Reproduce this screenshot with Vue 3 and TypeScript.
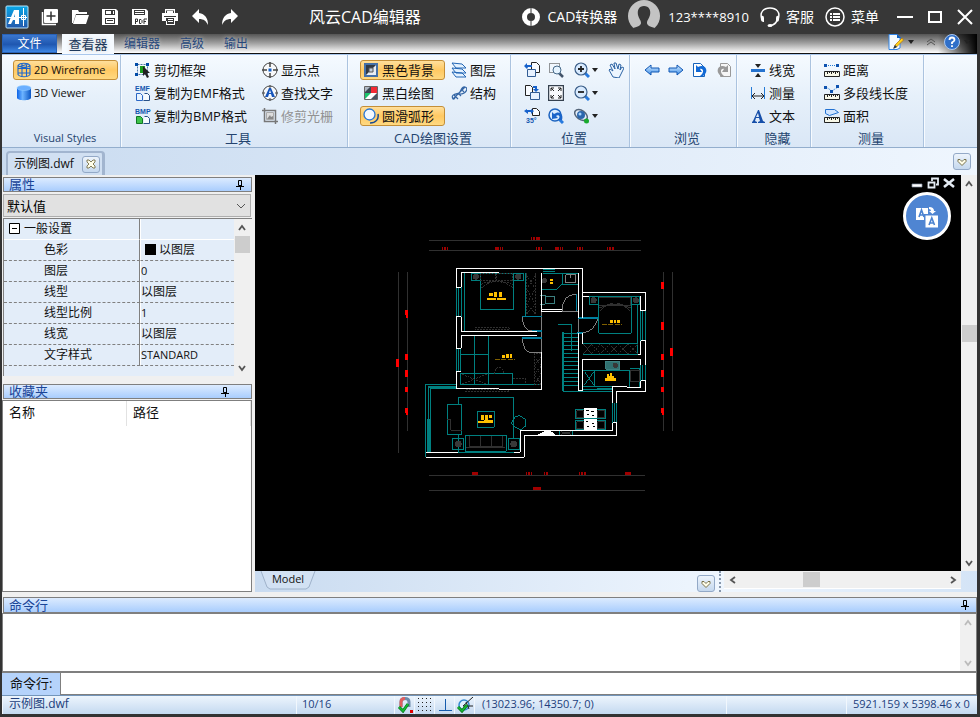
<script setup lang="ts">
import { ref } from 'vue'

interface Tool {
  icon: string
  label: string
  active?: boolean
  disabled?: boolean
}

interface Group {
  key: string
  title: string
  columns: Tool[][]
}

const quickActions: Tool[] = [
  { icon: 'new', label: '新建' },
  { icon: 'folder', label: '打开' },
  { icon: 'save', label: '保存' },
  { icon: 'pdf', label: '另存为PDF' },
  { icon: 'print', label: '打印' },
  { icon: 'undo', label: '撤销' },
  { icon: 'redo', label: '重做' },
]

const groups: Group[] = [
  {
    key: 'styles',
    title: 'Visual Styles',
    columns: [[
      { icon: 'wire', label: '2D Wireframe', active: true },
      { icon: 'cylinder', label: '3D Viewer' },
    ]],
  },
  {
    key: 'tools',
    title: '工具',
    columns: [
      [
        { icon: 'cutframe', label: '剪切框架' },
        { icon: 'emf', label: '复制为EMF格式' },
        { icon: 'bmp', label: '复制为BMP格式' },
      ],
      [
        { icon: 'points', label: '显示点' },
        { icon: 'findtext', label: '查找文字' },
        { icon: 'raster', label: '修剪光栅', disabled: true },
      ],
    ],
  },
  {
    key: 'settings',
    title: 'CAD绘图设置',
    columns: [
      [
        { icon: 'blackbg', label: '黑色背景', active: true },
        { icon: 'bw', label: '黑白绘图' },
        { icon: 'arc', label: '圆滑弧形', active: true },
      ],
      [
        { icon: 'layers', label: '图层' },
        { icon: 'struct', label: '结构' },
      ],
    ],
  },
]

const hideTools: Tool[] = [
  { icon: 'lineweight', label: '线宽' },
  { icon: 'dimension', label: '测量' },
  { icon: 'text', label: '文本' },
]

const measureTools: Tool[] = [
  { icon: 'distance', label: '距离' },
  { icon: 'polyline', label: '多段线长度' },
  { icon: 'area', label: '面积' },
]

const positionTools: { icon: string; label: string; menu?: boolean }[] = [
  { icon: 'rotleft', label: '向左旋转' },
  { icon: 'zoomwin', label: '窗口缩放' },
  { icon: 'zoomin', label: '放大', menu: true },
  { icon: 'hand', label: '平移' },
  { icon: 'rotright', label: '向右旋转' },
  { icon: 'fit', label: '适合窗口' },
  { icon: 'zoomout', label: '缩小', menu: true },
  { icon: 'blank', label: '' },
  { icon: 'angle', label: '旋转角度' },
  { icon: 'zoomprev', label: '上一个缩放' },
  { icon: 'orbit', label: '动态观察', menu: true },
]

const browseTools: Tool[] = [
  { icon: 'left', label: '后退' },
  { icon: 'right', label: '前进' },
  { icon: 'pageundo', label: '撤销视图' },
  { icon: 'pageredo', label: '重做视图', disabled: true },
]

const properties: { name: string; value: string; swatch?: boolean; latin?: boolean }[] = [
  { name: '色彩', value: '以图层', swatch: true },
  { name: '图层', value: '0', latin: true },
  { name: '线型', value: '以图层' },
  { name: '线型比例', value: '1', latin: true },
  { name: '线宽', value: '以图层' },
  { name: '文字样式', value: 'STANDARD', latin: true },
]

const preset = ref('默认值')
const command = ref('')
const log = ref('')
const stairs = Array.from({ length: 14 }, (_, i) => 337 + i * 12)
</script>

<template>
  <svg class="sprite" width="0" height="0" aria-hidden="true">
    <defs>
      <linearGradient id="g-logo" x1="0" y1="0" x2="0" y2="1"><stop offset="0" stop-color="#08a8e8" /><stop offset="1" stop-color="#2258ac" /></linearGradient>
      <linearGradient id="g-cyl"><stop offset="0" stop-color="#0c63e8" /><stop offset=".4" stop-color="#6db4ff" /><stop offset="1" stop-color="#0b56c4" /></linearGradient>
      <linearGradient id="g-arrow" x1="0" y1="0" x2="0" y2="1"><stop offset="0" stop-color="#d4ebff" /><stop offset="1" stop-color="#3f8fe8" /></linearGradient>
    </defs>
    <symbol id="i-blank" viewBox="0 0 16 16" />
    <symbol id="i-logo" viewBox="0 0 24 24">
      <rect x="1" y="1" width="22" height="22" rx="1" fill="url(#g-logo)" stroke="#b9e4fa" />
      <path d="M3 19 9 5h5v14h-4v-4H8l-2 4zM9 12h1V9z" fill="#fff" />
      <path d="M2 12.500h20M18.500 3v18M16.500 10.500h4v4h-4z" fill="none" stroke="#fff" />
    </symbol>
    <symbol id="i-new" viewBox="0 0 18 18"><rect x="3" y="1" width="14" height="14" rx="1" fill="#fff" /><path d="M1.500 4v12.500H15" fill="none" stroke="#fff" stroke-width="1.500" /><path d="M10 3.500v9M5.500 8h9" stroke="#333" stroke-width="1.500" /></symbol>
    <symbol id="i-folder" viewBox="0 0 18 18"><path d="M1 15V2h6l1 2h8v2H5L2 15zM5 7h13l-3 9H2z" fill="#fff" /></symbol>
    <symbol id="i-save" viewBox="0 0 18 18"><path d="M1 1h14l2 2v14H1z" fill="#fff" /><path d="M4 2h10v5H4zM4 10h10v6H4z" fill="#373737" /><path d="M5 3h8v3H5zM5 11h8v4H5z" fill="#fff" /><path d="M10 3h2v3h-2zM6 12h6v1H6z" fill="#373737" /></symbol>
    <symbol id="i-pdf" viewBox="0 0 18 18"><path d="M1 1h14l2 2v14H1z" fill="#fff" /><path d="M3 2h11v5H3z" fill="#373737" /><path d="M4 3h9v1H4zM4 5h9v1H4z" fill="#fff" /><path d="M4.500 16v-5h2v2.500h-2M8.500 11.500h1.500l1 1v2l-1 1H8.500zM13 16v-5h3M13 13.500h2" fill="none" stroke="#333" /></symbol>
    <symbol id="i-print" viewBox="0 0 18 18"><path d="M4 1h10v4h3v8h-3v4H5v-4H1V5h3z" fill="#fff" /><path d="M5 2.500h8V5H5zM3 8h12v1H3zM5 10h8v6H6v-3H5z" fill="#373737" /><path d="M6 3h6v2H6zM7 11h5v1H7zM7 13h5v1H7z" fill="#fff" /></symbol>
    <symbol id="i-undo" viewBox="0 0 18 18"><path d="M1 8 8 1v4c6 1 9 5 9 12-2-4-4-6-9-6v4z" fill="#fff" /></symbol>
    <symbol id="i-redo" viewBox="0 0 18 18"><path d="m17 8-7-7v4C4 6 1 10 1 17c2-4 4-6 9-6v4z" fill="#fff" /></symbol>
    <symbol id="i-convert" viewBox="0 0 20 20"><circle cx="10" cy="10" r="6.500" fill="none" stroke="#fff" stroke-width="5" /><path d="M10 0v6M10 14v6" stroke="#373737" /></symbol>
    <symbol id="i-avatar" viewBox="0 0 32 32"><circle cx="16" cy="16" r="16" fill="#c3c3c3" /><path d="M16 6c-5 0-7 4-6 9 1 4 3 5 3 8 0 2-3 4-8 5l4 4h14l4-4c-5-1-8-3-8-5 0-3 2-4 3-8 1-5-1-9-6-9z" fill="#373737" /></symbol>
    <symbol id="i-headset" viewBox="0 0 20 20"><path d="M2 12C-1 5 4 1 10 1s11 4 8 11M17 13c-1 4-3 5-7 5.500" fill="none" stroke="#fff" stroke-width="1.500" /><path d="M1 9q3-1 3 2v4Q0 15 1 9zM19 9q-3-1-3 2v4q4 0 3-6z" fill="#fff" /><ellipse cx="10" cy="18.500" rx="2.500" ry="1.500" fill="#fff" /></symbol>
    <symbol id="i-menu" viewBox="0 0 20 20"><circle cx="10" cy="10" r="9" fill="none" stroke="#fff" stroke-width="1.500" /><path d="M5 6h2v2H5zM8 6h7v2H8zM5 9h2v2H5zM8 9h7v2H8zM5 12h2v2H5zM8 12h7v2H8z" fill="#fff" /></symbol>
    <symbol id="i-min" viewBox="0 0 16 16"><path d="M0 7h16v2H0z" fill="#fff" /></symbol>
    <symbol id="i-max" viewBox="0 0 16 16"><path d="M2 3h12v10H2z" fill="none" stroke="#fff" stroke-width="2" /></symbol>
    <symbol id="i-close" viewBox="0 0 16 16"><path d="m1 1 14 14M15 1 1 15" stroke="#fff" stroke-width="2" /></symbol>
    <symbol id="i-edit" viewBox="0 0 16 16"><path d="M1 .5h8l3 3V14l-3 1.500H1z" fill="#f4faff" stroke="#3184e6" /><path d="M9 0v4h4z" fill="#0c5fc2" /><path d="m6 14 1-3 7-7 1.500 2-7 7z" fill="#ffd21a" stroke="#b66f0b" stroke-width=".7" /><path d="m5 15 2-4 2 2z" fill="#203850" /></symbol>
    <symbol id="i-help" viewBox="0 0 16 16"><circle cx="8" cy="8" r="7.500" fill="#2f6fc9" stroke="#a8c8f2" /><path d="M5.500 6Q5.500 3.500 8 3.500T10.500 6Q10.500 7 8 8.500V10M8 11.200v1.800" fill="none" stroke="#fff" stroke-width="1.800" /></symbol>
    <symbol id="i-caret" viewBox="0 0 6 4"><path d="M0 0h6L3 4z" fill="#222" /></symbol>
    <symbol id="i-collapse" viewBox="0 0 10 8"><path d="m1 4 4-3 4 3M1 7l4-3 4 3" fill="none" stroke="#555" /></symbol>

    <symbol id="i-wire" viewBox="0 0 16 16"><path d="M2 3.500C4 .5 12 .5 14 3.500v9c-2 3-10 3-12 0zM2 3.500c2 2.500 10 2.500 12 0M6 1.500v13.500M10.500 1.500v13.500M2 6.500h12M2 11h12M4 4.500 12 2" fill="none" stroke="#1b66cd" stroke-width="1.100" /></symbol>
    <symbol id="i-cylinder" viewBox="0 0 16 16"><path d="M1 3v10c1 3 13 3 14 0V3z" fill="url(#g-cyl)" /><ellipse cx="8" cy="3" rx="7" ry="2.500" fill="#6aafff" stroke="#8cc8ff" stroke-width=".6" /></symbol>
    <symbol id="i-cutframe" viewBox="0 0 16 16"><path d="M2.500 2.500h10v10h-10z" fill="none" stroke="#5077a5" stroke-dasharray="2 1" /><path d="M0 1h3v3H0zM11 1h3v3h-3zM0 11h3v3H0z" fill="#004ba8" /><path d="M5 4h5v7H5z" fill="#1a9d1e" /><path d="m8 4 7 7h-3l2 4-2 1-2-4-2 2z" fill="#222" /></symbol>
    <symbol id="i-emf" viewBox="0 0 16 16"><text x="0" y="6" class="tiny">EMF</text><path d="M1.500 8.500h4l2 2v5h-6z" fill="#e9f4ff" stroke="#2a66c4" /><path d="M9.500 8.500h3l2 2v5h-6" fill="#f7fbff" stroke="#274f86" /></symbol>
    <symbol id="i-bmp" viewBox="0 0 16 16"><text x="0" y="6" class="tiny">BMP</text><path d="M1.500 8.500h4l2 2v5h-6z" fill="#3ec34a" stroke="#0f7624" /><path d="M9.500 8.500h3l2 2v5h-6" fill="#f7fbff" stroke="#274f86" /></symbol>
    <symbol id="i-points" viewBox="0 0 16 16"><circle cx="8" cy="8" r="7" fill="#f7f8fa" stroke="#444" /><path d="M8 0v5M8 11v5M0 8h5M11 8h5" stroke="#444" stroke-width="1.500" /><path d="M6.500 6.500h3v3h-3z" fill="#1261ca" /></symbol>
    <symbol id="i-findtext" viewBox="0 0 16 16"><circle cx="8" cy="8" r="7" fill="#f3f6fa" stroke="#444" /><path d="m3 12 4-9h2l4 9h-3l-1-3H7l-1 3zM8 5 7 8h2z" fill="#1554ba" /><path d="M8 0v3M8 13v3M0 8h3M13 8h3" stroke="#444" /></symbol>
    <symbol id="i-raster" viewBox="0 0 16 16"><path d="M2.500 0v13.500H16M0 2.500h13.500V16" fill="none" stroke="#777" stroke-width="1.500" /><path d="M4.500 4.500h7v7h-7z" fill="#ddd" stroke="#aaa" /><path d="m5 11 3-4 1 2 2-1v3z" fill="#888" /></symbol>
    <symbol id="i-blackbg" viewBox="0 0 16 16"><path d="M2 2h12v12H2z" fill="#303945" stroke="#4470a8" stroke-width="2" /><path d="M3 13 13 3v10z" fill="#e8edf4" /><path d="M6 6h4v4H6z" fill="#c2cfdf" stroke="#555" /></symbol>
    <symbol id="i-bw" viewBox="0 0 16 16"><path d="M1.500 1.500h13v13h-13z" fill="#fff" stroke="#666" /><path d="M2 2h6v6H2z" fill="#3c4652" /><path d="M2 7V2h5z" fill="#aeb8c4" /><path d="M8 2h6v6H8z" fill="#f32a34" /><path d="M2 8h6v6H2z" fill="#1bc46c" /><path d="m2 14 6-6v6z" fill="#fff" /><path d="M8 14l6-6v6z" fill="#485461" /></symbol>
    <symbol id="i-arc" viewBox="0 0 16 16"><circle cx="6.500" cy="6.500" r="5.500" fill="#f2f8ff" stroke="#2876d6" stroke-width="1.300" /><path d="M15 6c1 5-2 9-8 9" fill="none" stroke="#1a4b91" stroke-width="1.500" /></symbol>
    <symbol id="i-layers" viewBox="0 0 16 16"><path d="m1 10 10 1 4 4-10 0zM1 6l10 1 4 4H5zM1 1l10 1 4 4H5z" fill="#e4f2ff" stroke="#2366b5" /></symbol>
    <symbol id="i-struct" viewBox="0 0 16 16"><path d="M2 14C-1 9 6 9 8 8s2-7 6-6 1 7-5 7-4 6-7 5zM2 14 14 2M3 10l4 4M7 8l3 3M10 4l3 3" fill="none" stroke="#3566a5" stroke-width="1.200" /></symbol>
    <symbol id="i-rotleft" viewBox="0 0 16 16"><path d="M7.500.5h5l3 3v7h-8z" fill="#f8fbff" stroke="#222" /><path d="M3.500 7.500h8v7h-8z" fill="#e6f1ff" stroke="#315c94" /><path d="m0 4 3-3v2h5v2H4l-1 2z" fill="#1762cc" /></symbol>
    <symbol id="i-rotright" viewBox="0 0 16 16"><path d="M1.500.5h5l2 2v8h-7z" fill="#f8fbff" stroke="#222" /><path d="M6.500 7.500h9v7h-9z" fill="#e6f1ff" stroke="#315c94" /><path d="M9 1h4v3h2l-3 3-3-3h2V3H9z" fill="#1762cc" /></symbol>
    <symbol id="i-angle" viewBox="0 0 16 16"><path d="M8.500.5h4l3 3v4h-7z" fill="#f8fbff" stroke="#222" /><path d="m0 3 3-2v1h4V1l3 2-3 3V4H4v2z" fill="#1762cc" /><text x="2" y="15" class="tiny">35°</text></symbol>
    <symbol id="i-zoomwin" viewBox="0 0 16 16"><path d="M1.500 1.500h10v9h-10z" fill="none" stroke="#333" stroke-dasharray="1 1" /><path d="m11 11 4 4" stroke="#42536a" stroke-width="2.500" /><circle cx="9" cy="8" r="4" fill="#e6f4ff" stroke="#466989" /></symbol>
    <symbol id="i-zoomin" viewBox="0 0 16 16"><path d="m10 10 5 5" stroke="#287ade" stroke-width="3" /><circle cx="7" cy="7" r="6" fill="#d9ebff" stroke="#3c5f8a" stroke-width="1.200" /><path d="M4 7h6M7 4v6" stroke="#222" stroke-width="1.800" /></symbol>
    <symbol id="i-zoomout" viewBox="0 0 16 16"><path d="m10 10 5 5" stroke="#287ade" stroke-width="3" /><circle cx="7" cy="7" r="6" fill="#d9ebff" stroke="#3c5f8a" stroke-width="1.200" /><path d="M4 7h6" stroke="#222" stroke-width="1.800" /></symbol>
    <symbol id="i-zoomprev" viewBox="0 0 16 16"><path d="m11 11 4 4" stroke="#287ade" stroke-width="3" /><circle cx="7" cy="7" r="6" fill="#dceeff" stroke="#1c63bf" stroke-width="1.500" /><path d="M4 11V4l2 2c5-4 10 0 8 6h-3c2-4-1-6-3-4l2 2z" fill="#1b65c9" /></symbol>
    <symbol id="i-fit" viewBox="0 0 16 16"><path d="M.5.5h15v15H.5z" fill="#f8fafc" stroke="#35414f" stroke-width="1.500" /><path d="M3 6V3h3M10 3h3v3M13 10v3h-3M6 13H3v-3M3 3l3 3M13 3l-3 3M3 13l3-3M13 13l-3-3" fill="none" stroke="#222" /></symbol>
    <symbol id="i-orbit" viewBox="0 0 16 16"><ellipse cx="7" cy="7" rx="7" ry="4.500" transform="rotate(35 7 7)" fill="#e5eef8" stroke="#546579" stroke-width="1.500" /><circle cx="7" cy="7" r="4" fill="#2a66ac" /><circle cx="6" cy="6" r="1.500" fill="#a8d4ff" /><circle cx="12.500" cy="13" r="2.500" fill="#19aa2d" /></symbol>
    <symbol id="i-hand" viewBox="0 0 16 16"><path d="M5 15 1 8l1-1 3 2-3-6 2-1 3 5-1-6h2l2 6 1-5 2 1-1 5 2-3 2 1-3 6-2 4z" fill="#edf6ff" stroke="#2e64a4" /></symbol>
    <symbol id="i-left" viewBox="0 0 16 16"><path d="m1 8 6-5v3h8v4H7v3z" fill="url(#g-arrow)" stroke="#0f56b4" /></symbol>
    <symbol id="i-right" viewBox="0 0 16 16"><path d="m15 8-6-5v3H1v4h8v3z" fill="url(#g-arrow)" stroke="#0f56b4" /></symbol>
    <symbol id="i-pageundo" viewBox="0 0 16 16"><path d="M1.500 1.500h7l4 4v9h-11z" fill="#fff" stroke="#1763bb" /><path d="M4 10V3l2 2c7-4 12 4 5 9H8c5-4 3-8 0-7l2 3z" fill="#1169d5" /></symbol>
    <symbol id="i-pageredo" viewBox="0 0 16 16"><path d="M4.500 1.500h7l3 3v10h-10z" fill="#f6f6f6" stroke="#999" /><path d="M12 10V3l-2 2C3 1-2 9 5 14h3C3 10 5 6 8 7l-2 3z" fill="#999" /></symbol>
    <symbol id="i-lineweight" viewBox="0 0 16 16"><path d="M1 7h14v3H1z" fill="#2573cf" /><path d="M5 2h6L8 6zM5 15h6l-3-4z" fill="#222" /></symbol>
    <symbol id="i-dimension" viewBox="0 0 16 16"><path d="M1.500 2v12M14.500 2v12" stroke="#247ad6" /><path d="M2 11h12M5 8l-3 3 3 3M11 8l3 3-3 3" fill="none" stroke="#222" /></symbol>
    <symbol id="i-text" viewBox="0 0 16 16"><path d="m2 14 1-1 5-11h1l4 11 2 1v1H8v-1l2-1-1-3H6l-1 3 2 1v1H2zM6 9h3L8 5z" fill="#174fa9" /></symbol>
    <symbol id="i-ruler" viewBox="0 0 16 16"><path d="M.5 9.500h15v5H.5z" fill="#f8f8e8" stroke="#222" /><path d="M3.500 10v2M5.500 10v1M7.500 10v2M9.500 10v1M11.500 10v2M13.500 10v1" stroke="#222" /></symbol>
    <symbol id="i-distance" viewBox="0 0 16 16"><path d="M2 3.500h12" stroke="#247bd6" stroke-dasharray="1 1" /><path d="M0 2h3v3H0zM12 2h3v3h-3z" fill="#0d52af" /><use href="#i-ruler" width="16" height="16" /></symbol>
    <symbol id="i-polyline" viewBox="0 0 16 16"><path d="m2 2 6 4 6-4" fill="none" stroke="#247bd6" stroke-dasharray="1 1" /><path d="M0 1h3v3H0zM12 0h3v3h-3zM6 5h3v3H6z" fill="#0d52af" /><use href="#i-ruler" width="16" height="16" /></symbol>
    <symbol id="i-area" viewBox="0 0 16 16"><path d="M1.500 1.500h9l4 3-9 3-4-2z" fill="#cfe4ff" stroke="#2372d2" /><use href="#i-ruler" width="16" height="16" /></symbol>

    <symbol id="i-heart" viewBox="0 0 10 10"><path d="m5 8.500-4-4v-2h2l2 2 2-2h2v2z" fill="#fffde8" stroke="#77704a" /></symbol>
    <symbol id="i-tabclose" viewBox="0 0 10 10"><path d="M1 1h2l2 2 2-2h2v2L7 5l2 2v2H7L5 7 3 9H1V7l2-2-2-2z" fill="#fffde8" stroke="#77704a" stroke-width=".9" /></symbol>
    <symbol id="i-pin" viewBox="0 0 8 10"><path d="M2.500.5h3v5h-3zM0 6.500h8M4.500 7v3M5.500 1v5" fill="none" stroke="#000" /></symbol>
    <symbol id="i-up" viewBox="0 0 8 8"><path d="m1 6 3-4 3 4" fill="none" stroke="currentColor" stroke-width="1.800" /></symbol>
    <symbol id="i-down" viewBox="0 0 8 8"><path d="m1 2 3 4 3-4" fill="none" stroke="currentColor" stroke-width="1.800" /></symbol>
    <symbol id="i-prev" viewBox="0 0 8 8"><path d="M6 1 2 4l4 3" fill="none" stroke="currentColor" stroke-width="1.800" /></symbol>
    <symbol id="i-next" viewBox="0 0 8 8"><path d="m2 1 4 3-4 3" fill="none" stroke="currentColor" stroke-width="1.800" /></symbol>
    <symbol id="i-wmin" viewBox="0 0 12 12"><path d="M1 7h10v3H1z" fill="#fff" stroke="#8794a5" stroke-width=".7" /></symbol>
    <symbol id="i-wrestore" viewBox="0 0 12 12"><path d="M5 4V1.500h6v6H9M1.500 5.500h6v5h-6z" fill="none" stroke="#e4ebf3" stroke-width="1.800" /></symbol>
    <symbol id="i-wclose" viewBox="0 0 12 12"><path d="m1 2 10 8M11 2 1 10" stroke="#e4ebf3" stroke-width="2.600" /></symbol>
    <symbol id="i-translate" viewBox="0 0 24 24"><path d="M1 4h12v6H9v6H1zM10.500 11.500H23v12H10.500z" fill="#fff" /><path d="m4 13 2.500-7L9 13M5 11h3M14 21l2.800-7 2.700 7M15 19h4" fill="none" stroke="#4a82d0" stroke-width="1.600" /><path d="M14 3q5 0 5 4h2l-3.500 3L14 7h2q0-2-2-2z" fill="#fff" /></symbol>

    <symbol id="i-osnap" viewBox="0 0 16 16"><path d="M4 10V5q0-3.500 4-3.500T12 5v5" fill="none" stroke="#6d8cab" stroke-width="3" /><path d="M4 10V5q0-3.500 4-3.500" fill="none" stroke="#df5f5f" stroke-width="3" /><path d="m2 10 4 4 5-7" fill="none" stroke="#06751b" stroke-width="3" /><path d="m2 10 4 4 5-7" fill="none" stroke="#16bc33" stroke-width="1.500" /><path d="M13 13h3v3h-3z" fill="#e00000" /></symbol>
    <symbol id="i-grid" viewBox="0 0 16 16"><path d="M1 1.500h15M1 5.500h15M1 9.500h15M1 13.500h15" stroke="#222" stroke-dasharray="1 3" /></symbol>
    <symbol id="i-ortho" viewBox="0 0 16 16"><path d="M8.500 2v11M2 13.500h13" stroke="#165cad" /></symbol>
    <symbol id="i-track" viewBox="0 0 16 16"><circle cx="7" cy="8" r="5" fill="#def0ff" stroke="#348bd1" stroke-width="1.500" /><path d="M16 0 6 9h10M9 5l3 7" fill="none" stroke="#222" /><path d="m1 10 4 4 5-6" fill="none" stroke="#06751b" stroke-width="3" /><path d="m1 10 4 4 5-6" fill="none" stroke="#16bc33" stroke-width="1.500" /></symbol>
  </svg>

  <div class="app">
    <header class="titlebar">
      <svg class="logo"><use href="#i-logo" /></svg>
      <nav class="quick" aria-label="快速访问">
        <button v-for="a in quickActions" :key="a.icon" type="button" :aria-label="a.label"><svg class="i18"><use :href="'#i-' + a.icon" /></svg></button>
      </nav>
      <h1>风云CAD编辑器</h1>
      <div class="account">
        <button type="button"><svg class="i20"><use href="#i-convert" /></svg>CAD转换器</button>
        <button type="button" class="user"><svg class="avatar"><use href="#i-avatar" /></svg>123****8910</button>
        <button type="button"><svg class="i20"><use href="#i-headset" /></svg>客服</button>
        <button type="button"><svg class="i20"><use href="#i-menu" /></svg>菜单</button>
      </div>
      <div class="winctl">
        <button type="button" aria-label="最小化"><svg class="i16"><use href="#i-min" /></svg></button>
        <button type="button" aria-label="最大化"><svg class="i16"><use href="#i-max" /></svg></button>
        <button type="button" aria-label="关闭"><svg class="i16"><use href="#i-close" /></svg></button>
      </div>
    </header>

    <div class="frame">
      <nav class="tabs">
        <button type="button" class="file">文件</button>
        <button type="button" class="tab current">查看器</button>
        <button type="button" class="tab">编辑器</button>
        <button type="button" class="tab">高级</button>
        <button type="button" class="tab">输出</button>
        <span class="grow"></span>
        <button type="button" class="mini" aria-label="界面设置"><svg class="i16"><use href="#i-edit" /></svg><svg class="caret"><use href="#i-caret" /></svg></button>
        <button type="button" class="mini fold" aria-label="折叠功能区"><svg class="fold-icon"><use href="#i-collapse" /></svg></button>
        <button type="button" class="mini" aria-label="帮助"><svg class="i16"><use href="#i-help" /></svg><svg class="caret"><use href="#i-caret" /></svg></button>
      </nav>

      <section class="ribbon">
        <div v-for="g in groups" :key="g.key" class="group" :class="g.key">
          <div class="cols">
            <div v-for="(col, c) in g.columns" :key="c" class="col">
              <button v-for="t in col" :key="t.icon" type="button" class="tool" :class="{ active: t.active, latin: g.key === 'styles' }" :disabled="t.disabled">
                <svg class="i16"><use :href="'#i-' + t.icon" /></svg>{{ t.label }}
              </button>
            </div>
          </div>
          <div class="caption" :class="{ latin: g.key === 'styles' }">{{ g.title }}</div>
        </div>
        <div class="group position">
          <div class="iconpad">
            <template v-for="t in positionTools" :key="t.icon">
              <span v-if="t.icon === 'blank'"></span>
              <button v-else type="button" :aria-label="t.label"><svg class="i16"><use :href="'#i-' + t.icon" /></svg><svg v-if="t.menu" class="caret"><use href="#i-caret" /></svg></button>
            </template>
          </div>
          <div class="caption">位置</div>
        </div>
        <div class="group browse">
          <div class="iconrow">
            <button v-for="t in browseTools" :key="t.icon" type="button" :aria-label="t.label" :disabled="t.disabled"><svg class="i16"><use :href="'#i-' + t.icon" /></svg></button>
          </div>
          <div class="caption">浏览</div>
        </div>
        <div class="group hide">
          <div class="cols"><div class="col">
            <button v-for="t in hideTools" :key="t.icon" type="button" class="tool"><svg class="i16"><use :href="'#i-' + t.icon" /></svg>{{ t.label }}</button>
          </div></div>
          <div class="caption">隐藏</div>
        </div>
        <div class="group measure">
          <div class="cols"><div class="col">
            <button v-for="t in measureTools" :key="t.icon" type="button" class="tool"><svg class="i16"><use :href="'#i-' + t.icon" /></svg>{{ t.label }}</button>
          </div></div>
          <div class="caption">测量</div>
        </div>
      </section>

      <div class="docbar">
        <div class="doctab"><span>示例图.dwf</span><button type="button" class="soft" aria-label="关闭文档"><svg class="i10"><use href="#i-tabclose" /></svg></button></div>
        <button type="button" class="soft" aria-label="文档列表"><svg class="i10"><use href="#i-heart" /></svg></button>
      </div>

      <main class="work">
        <aside class="side">
          <h2 class="panelhead"><span>属性</span><svg class="pin"><use href="#i-pin" /></svg></h2>
          <div class="combo">
            <select v-model="preset" aria-label="属性对象"><option>默认值</option></select>
            <svg class="combo-arrow" viewBox="0 0 10 6"><path d="m1 1 4 4 4-4" fill="none" stroke="#555" /></svg>
          </div>
          <div class="gridbox">
            <table>
              <thead><tr><th><svg class="minus" viewBox="0 0 11 11"><path d="M.5.5h10v10H.5zM3 5.500h5" fill="#fff" stroke="#000" /></svg>一般设置</th><td></td></tr></thead>
              <tbody>
                <tr v-for="p in properties" :key="p.name">
                  <th>{{ p.name }}</th>
                  <td :class="{ latin: p.latin }"><i v-if="p.swatch" class="swatch"></i>{{ p.value }}</td>
                </tr>
              </tbody>
            </table>
            <div class="vscroll side-scroll">
              <button type="button" aria-label="向上"><svg class="i8"><use href="#i-up" /></svg></button>
              <i class="thumb"></i><span class="grow"></span>
              <button type="button" aria-label="向下"><svg class="i8"><use href="#i-down" /></svg></button>
            </div>
          </div>
          <h2 class="panelhead fav"><span>收藏夹</span><svg class="pin"><use href="#i-pin" /></svg></h2>
          <div class="favlist"><span>名称</span><span>路径</span></div>
        </aside>

        <section class="stage">
          <div class="viewrow">
            <div class="view">
              <svg class="plan" viewBox="0 0 706 396" shape-rendering="crispEdges" fill="none" role="img" aria-label="户型平面图">
                <g transform="translate(125 50) scale(.333333)" stroke-width="3">
                  <path stroke="#303030" d="M148 46H782M148 76H782M55 141V683M82 141V617M850 141V617M877 141V617M148 751H795M148 796H795" />
                  <g fill="#ff0000">
                    <path d="M75 255h9v24h-6v-9h-3zM75 387h9v18h-9zM48 402h9v24h-9zM75 435h9v21h-9zM75 486h9v15h-9zM75 549h9v21h-6v-6h-3zM843 171h9v21h-9zM843 291h9v24h-9zM870 369h9v24h-9zM843 387h9v18h-9zM843 435h9v21h-9zM843 486h9v15h-9zM843 549h9v21h-6v-6h-3z" />
                  </g>
                  <path stroke="#a00000" stroke-width="8" stroke-dasharray="4 1 7 2" d="M186 71h18M346 71h22M453 41h26M468 71h18M526 71h22M591 71h18M681 71h22M275 745h19M438 745h18M492 745h16M597 745h22M734 745h20M458 790h26" />

                  <g stroke="#008080">
                    <path d="M253 142V319M274 145V166H301V253H401V166H431V145ZM301 145V166M401 145V166M437 145V272M230 187v88M237 187v88M244 187v88M230 370v68M236 370v68M242 370v68M283 331V478M325 331V478M241 388H325M241 445H398V478H241ZM398 478H484" />
                    <path d="M138 697V478H229M145 682V484H229M151 682V490H229M142 583V682M148 583V682M148 487H229M235 538V517H401V640M235 628V682H403M202 538h43v90h-43zM217 640h34v34h-34zM385 640h34v34h-34zM256 631h123v48H256zM292 559h51v48h-51z" />
                    <path d="m393 595 12-19 13-5 17 12 2 20-14 11-19-8Z" />
                    <path d="M489 133h35M489 139h35M489 145h107M547 145V178H595V145M484 194H530L546 178M484 166v28" />
                    <path d="M655 214v108l4 3h93l3-3V214M628 214v24h27M628 214h152v24h-25M773 238V356M608 356H773V388H608M782 258v89M789 258v89M797 258v89M782 421v46M789 421v46M797 421v46" />
                    <path d="M534 298h40v80M552 322V498M549 322V498M549 499H597" />
                    <path v-for="y in stairs" :key="y" :d="`M552 ${y - 12}H596`" />
                    <path d="M608 436H748V487M643 436v48M751 430h28v57M608 484H698M608 493H698M614 441l27 38M641 441l-27 38M597 499H698M651 490H698" />
                    <path d="M698 534v59M704 534v59M710 534v59M586 553h91v27h-91zM586 586h91v29h-91zM538 617h40v14h-40z" />
                  </g>
                  <g stroke="#3c8080"><path d="M480 211h16v27h-16M496 216h28v19h-28M598 215" /><path fill="#307070" d="M678 409h41v24h-41z" /></g>
                  <g stroke="#303030">
                    <path d="M303 146h45v22h-45zM351 146h48v22h-48zM303 190q22-20 48-21 28 2 48 20M303 178q15-8 38-8M362 170q24 1 38 10M440 145v125M466 145v125M440 150l26 42-26 45 26 30M466 150l-26 42 26 45-26 30" stroke-dasharray="6 3" />
                    <path d="M286 309H388V315H286zM257 495H386V501H257zM246 448l74 29M320 448l-74 29M399 460H437V478M463 385V478H484V385zM463 395l21 28-21 26 21 29M484 395l-21 28 21 26-21 29M345 447q-2-20 12-20t12 20" stroke-dasharray="6 3" />
                    <path d="M268 632V664H368V632M302 632v32M334 632v32M202 583h10v33h33M259 667h117M658 218h94v24h-94M658 259q18-22 47-22t46 22M658 249l40-15M752 249l-40-15M752 436h26v34h-26z" />
                    <path d="m610 358 25 28 25-28 28 28 28-28 28 28 28-28M610 386l25-28 25 28 28-28 28 28 28-28 28 28" stroke-dasharray="5 3" />
                    <path d="M590 557h20v21h-20zM653 557h21v21h-21zM590 590h20v21h-20zM653 590h21v21h-21zM543 620l30 8M573 620l-30 8" />
                  </g>
                  <g fill="#383838"><circle cx="288" cy="155" r="9" /><circle cx="415" cy="155" r="9" /><circle cx="235" cy="657" r="10" /><circle cx="401" cy="657" r="10" /><circle cx="641" cy="226" r="9" /><circle cx="768" cy="226" r="9" /><circle cx="706" cy="421" r="8" /><circle cx="493" cy="167" r="8" /></g>
                  <g stroke="#808080">
                    <path d="M427 275q2 38 23 43h35M427 340q2 38 25 43h33M485 260V382M547 253q0-42 40-46M547 253v6h50M653 282q-8 35-45 42M597 263v58M557 150h30v24h-30zM571 148v12" />
                  </g>
                  <path stroke="#0080a0" stroke-width="5" d="M427 275h58M455 318h30M427 340h58M590 207v50M595 279h60M590 324h20" />

                  <g stroke="#fff">
                    <path d="M229 187V130H608V278M244 187V142H357M244 275V319H470M229 275V370M244 370V331H470M229 438V490H357M357 493H485V382M244 440H229M485 145V260M485 253H547M485 259H547M597 260V278M608 203H797V258M608 214H628M782 258V214M782 347V388H775M797 347V421M596 325V498H608V403H782V421M782 467V487H741V484H698V534M797 467V499H710V534M698 593V616H421V682H403M710 593V631H433V697H138M138 682H235M608 325V356M229 187h15M229 275h15M229 370h15M698 593h12M782 258h15M782 347h15M782 467h15M596 145V263" />
                  </g>
                  <path fill="#fff" d="M612 550h38v29h-38zM612 583h38v33h-38zM475 628l18-9h20l13 10h-51z" />
                  <path stroke="#000" d="M618 556h8M634 561h9M620 570h7M635 572h6M618 590h7M635 595h6M622 604h6M638 606h7" />
                  <path stroke="#008080" d="M610 581h42" />
                  <g fill="#ffc000">
                    <path d="M328 203h10v9h-10zM343 201h9v14h-9zM357 202h10v13h-10zM321 218h27v6h-27zM350 219h28v6h-28zM366 390h10v8h-10zM379 388h7v11h-7zM389 388h7v11h-7zM303 571h8v13h-8zM315 570h9v14h-9zM328 570h7v10h-7zM295 587h16v7h-16zM313 586h26v8h-26z" />
                    <path d="M510 162h9v6h-9zM510 171h9v6h-9zM690 285h9v9h-9zM702 285h7v9h-7zM711 285h9v9h-9zM681 446h5v7h5v-9h5v8h5v8h-20zM675 459h33v8h-33z" />
                  </g>
                  <path stroke="#806000" d="M345 403h61M666 298h60" stroke-dasharray="15 4" />
                </g>
              </svg>
              <div class="mdi">
                <button type="button" aria-label="最小化绘图"><svg class="i12"><use href="#i-wmin" /></svg></button>
                <button type="button" aria-label="还原绘图"><svg class="i12"><use href="#i-wrestore" /></svg></button>
                <button type="button" aria-label="关闭绘图"><svg class="i12"><use href="#i-wclose" /></svg></button>
              </div>
              <button type="button" class="bubble" aria-label="翻译文字"><svg class="i24"><use href="#i-translate" /></svg></button>
            </div>
            <div class="vscroll view-scroll">
              <button type="button" aria-label="向上滚动"><svg class="i8"><use href="#i-up" /></svg></button>
              <span class="before"></span><i class="thumb"></i><span class="after"></span>
              <button type="button" aria-label="向下滚动"><svg class="i8"><use href="#i-down" /></svg></button>
            </div>
          </div>
          <div class="modelbar">
            <button type="button" class="model"><svg viewBox="0 0 56 20" aria-hidden="true"><path d="m1 0 6 16 3 2h36l3-2 6-16" fill="#d2e1f3" stroke="#9fb2ca" /></svg><span>Model</span></button>
            <span class="grow"></span>
            <button type="button" class="soft" aria-label="布局列表"><svg class="i10"><use href="#i-heart" /></svg></button>
            <i class="splitter"></i>
            <div class="hscroll">
              <button type="button" aria-label="向左滚动"><svg class="i8"><use href="#i-prev" /></svg></button>
              <span class="before"></span><i class="thumb"></i><span class="after"></span>
              <button type="button" aria-label="向右滚动"><svg class="i8"><use href="#i-next" /></svg></button>
            </div>
          </div>
        </section>
      </main>

      <section class="console">
        <h2 class="panelhead"><span>命令行</span><svg class="pin"><use href="#i-pin" /></svg></h2>
        <div class="output">
          <textarea v-model="log" readonly aria-label="命令记录"></textarea>
          <div class="vscroll dim">
            <button type="button" aria-label="记录向上"><svg class="i8"><use href="#i-up" /></svg></button>
            <span class="grow"></span>
            <button type="button" aria-label="记录向下"><svg class="i8"><use href="#i-down" /></svg></button>
          </div>
        </div>
        <div class="prompt"><label for="cmd">命令行:</label><input id="cmd" v-model="command" type="text" autocomplete="off" /></div>
      </section>

      <footer class="status">
        <span class="doc">示例图.dwf</span>
        <span class="page">10/16</span>
        <button type="button" aria-label="对象捕捉"><svg class="i16"><use href="#i-osnap" /></svg></button>
        <button type="button" aria-label="栅格"><svg class="i16"><use href="#i-grid" /></svg></button>
        <button type="button" aria-label="正交"><svg class="i16"><use href="#i-ortho" /></svg></button>
        <button type="button" aria-label="极轴追踪"><svg class="i16"><use href="#i-track" /></svg></button>
        <span class="coords">(13023.96; 14350.7; 0)</span>
        <span class="spare"></span>
        <span class="size">5921.159 x 5398.46 x 0</span>
      </footer>
    </div>
  </div>
</template>

<style>
body { margin: 0; background: #333; }
</style>

<style scoped>
* { box-sizing: border-box; }
.sprite { display: block; }
.tiny { font: bold 7px "Liberation Sans", sans-serif; fill: #1256af; }
.app {
  display: flex; flex-direction: column; min-height: 100vh;
  font-family: "Open Sans", "Noto Sans CJK SC", sans-serif; font-size: 13px; line-height: 16px; color: #111;
  background: #333;
}
button { margin: 0; padding: 0; border: 0; background: none; font: inherit; color: inherit; display: flex; align-items: center; justify-content: center; white-space: nowrap; }
svg { flex: none; display: block; }
.i8 { width: 8px; height: 8px; }
.i10 { width: 10px; height: 10px; }
.i12 { width: 12px; height: 12px; }
.i16 { width: 16px; height: 16px; }
.i18 { width: 18px; height: 18px; }
.i20 { width: 20px; height: 20px; }
.i24 { width: 24px; height: 24px; }
.caret { width: 6px; height: 4px; }
.grow { flex: 1; }
.latin { font-size: 11px; }

.titlebar { display: flex; align-items: center; height: 34px; background: #373737; color: #fff; padding-left: 5px; }
.logo { width: 24px; height: 24px; margin-right: 6px; }
.quick { display: flex; }
.quick button { width: 30px; height: 34px; }
h1 { flex: 1; margin: 0; padding-left: 64px; font-size: 16px; font-weight: 400; line-height: 22px; white-space: nowrap; }
.account { display: flex; align-items: center; gap: 11px; height: 34px; font-size: 14px; }
.account button { gap: 6px; height: 34px; }
.account .user { gap: 8px; font-size: 13px; }
.avatar { width: 32px; height: 32px; align-self: flex-start; }
.winctl { display: flex; margin-left: 11px; }
.winctl button { width: 30px; height: 32px; }

.frame { flex: 1; display: flex; flex-direction: column; margin: 0 3px 3px 2px; background: #f0f0f0; min-height: 0; }
.tabs {
  display: flex; height: 20px; border-bottom: 1px solid #111; padding-right: 7px; color: #27477b; font-size: 12px;
  background: linear-gradient(90deg, transparent 96%, #000 100%), linear-gradient(#555, #a4a4a4 50%, #fff);
}
.file { width: 55px; margin-right: 5px; color: #fff; background: linear-gradient(#3b78cf, #1f57b0 55%, #3c86e4); border: 1px solid #2862b8; font-size: 12px; }
.tab { padding: 0 10px; height: 19px; text-shadow: 0 0 4px #ccc; }
.tab.current { width: 52px; height: 20px; background: #f5faff; font-size: 13px; padding: 0; color: #1e395b; }
.mini { gap: 4px; height: 16px; }
.fold { margin: 0 8px 0 12px; }
.fold-icon { width: 10px; height: 8px; }

.ribbon { display: flex; height: 94px; border-top: 1px solid #a9c7ec; border-bottom: 1px solid #93aecd; background: linear-gradient(#f5faff, #e6f0fa 45%, #dae7f6); }
.group { flex: none; display: flex; flex-direction: column; border-right: 1px solid #abc3df; box-shadow: 1px 0 0 #f7fbff; padding-top: 5px; }
.caption { margin-top: auto; padding-left: 8px; height: 17px; line-height: 16px; text-align: center; color: #24446f; }
.cols { display: flex; }
.col { display: flex; flex-direction: column; gap: 3px; }
.tool { height: 20px; justify-content: flex-start; gap: 3px; padding: 0 3px 1px 2px; border: 1px solid transparent; border-radius: 3px; }
.tool.active { border-color: #c48f38; background: linear-gradient(#ffdf9c, #ffc963 50%, #ffd981); }
.tool:disabled { color: #929292; }
.styles { width: 119px; }
.styles .cols { padding: 0 2px 0 11px; }
.styles .tool { gap: 2px; }
.styles .col { flex: 1; }
.tools { width: 227px; }
.tools .cols { padding-left: 11px; gap: 8px; }
.settings { width: 163px; }
.settings .cols { padding-left: 12px; gap: 3px; }
.settings .col:first-child { width: 85px; }
.position { width: 119px; }
.iconpad { display: grid; grid-template-columns: 24px 26px 34px 20px; grid-auto-rows: 20px; row-gap: 3px; padding-left: 13px; }
.iconpad button { justify-content: flex-start; gap: 2px; }
.browse { width: 107px; }
.iconrow { display: flex; gap: 8px; height: 20px; padding-left: 14px; }
.hide { width: 74px; }
.hide .cols, .measure .cols { padding-left: 10px; }
.measure { width: 113px; }

.docbar { display: flex; align-items: center; justify-content: space-between; height: 27px; padding: 0 6px 0 4px; background: linear-gradient(90deg, #c9dbf0, #eff6fe); }
.doctab { display: flex; align-items: center; align-self: flex-end; height: 24px; gap: 8px; padding: 0 2px 0 6px; border: 2px solid #a2b5cf; border-right-width: 3px; border-bottom: 0; border-radius: 4px 4px 0 0; background: #d1e0f2; font-size: 12px; }
.soft { width: 18px; height: 17px; border: 1px solid #93a9c7; border-radius: 3px; background: linear-gradient(#edf4fc, #c5d8ee); }

.work { flex: 1; display: flex; min-height: 421px; }
.side { width: 250px; flex: none; display: flex; flex-direction: column; padding: 2px 0 5px 1px; margin-right: 3px; }
.panelhead { display: flex; align-items: center; justify-content: space-between; flex: none; height: 15px; margin: 0; padding: 0 7px 0 5px; border: 1px solid #7f7f7f; background: linear-gradient(#dcebff, #a9cdfd); color: #1a4597; font-size: 13px; font-weight: 400; line-height: 13px; }
.pin { width: 8px; height: 10px; }
.combo { display: grid; align-items: center; margin: 2px 1px 0 0; height: 23px; background: #e1e1e1; border: 1px solid #adadad; }
.combo select { grid-area: 1 / 1; width: 100%; height: 21px; padding: 0 3px; border: 0; background: none; appearance: none; font: inherit; color: #000; }
.combo-arrow { grid-area: 1 / 1; justify-self: end; width: 10px; height: 6px; margin-right: 4px; pointer-events: none; }
.gridbox { display: flex; height: 158px; flex: none; margin-top: 1px; border-top: 1px solid #808080; border-left: 1px solid #808080; background: #e3edf9; }
table { flex: 1; align-self: flex-start; border-collapse: separate; border-spacing: 0; table-layout: fixed; font-size: 12px; }
th, td { height: 21px; padding: 0; line-height: 16px; font-weight: 400; text-align: left; border-bottom: 1px dashed #808080; }
th { width: 136px; border-right: 1px solid #808080; }
tbody th { padding-left: 40px; }
td { border-left: 1px solid #fff; }
td.latin { font-size: 11px; }
thead th, thead td { border-bottom: 1px solid #fff; }
.minus { display: inline-block; width: 11px; height: 11px; margin: 0 4px 0 5px; vertical-align: -1px; }
.swatch { display: inline-block; width: 11px; height: 11px; margin: 0 3px 0 4px; background: #000; vertical-align: -1px; }
.vscroll { flex: none; display: flex; flex-direction: column; width: 16px; background: #f0f0f0; color: #555; }
.vscroll button { height: 17px; width: 100%; }
.vscroll .thumb { height: 17px; margin: 0 0 0 1px; background: #cdcdcd; }
.side-scroll { width: 18px; padding-right: 2px; }
.fav { margin-top: 8px; padding-right: 22px; }
.favlist { flex: 1; display: flex; border: 1px solid #7f7f7f; background: #fff; margin: 1px 0 0 -1px; }
.favlist span { height: 25px; padding: 3px 6px; border-right: 1px solid #e2e2e2; width: 124px; }

.stage { flex: 1; min-width: 0; display: flex; flex-direction: column; margin-bottom: 5px; }
.viewrow { flex: 1; display: flex; min-height: 0; }
.view { flex: 1; min-width: 0; position: relative; background: #000; }
.plan { width: 100%; height: 100%; }
.mdi { position: absolute; top: 2px; right: 6px; display: flex; gap: 4px; }
.bubble { position: absolute; top: 17px; right: 10px; width: 48px; height: 48px; border: 3px solid #fff; border-radius: 50%; background: #4f85d2; }
.view-scroll .before { flex: 133; }
.view-scroll .after { flex: 212; }
.modelbar { display: flex; align-items: flex-end; flex: none; height: 21px; padding: 0 16px 0 5px; background: linear-gradient(90deg, #c9dbf0, #eff6fe 65%, #d4e4f6); }
.model { display: grid; align-self: flex-start; font-size: 11px; line-height: 16px; }
.model svg, .model span { grid-area: 1 / 1; }
.model svg { width: 56px; height: 20px; }
.model span { align-self: start; justify-self: center; }
.splitter { width: 3px; height: 21px; margin: 0 2px 0 4px; border-left: 2px dotted #8797ac; }
.hscroll { display: flex; align-self: flex-start; flex: 0 1 237px; height: 18px; padding: 1px 0; background: #f0f0f0; border-bottom: 1px solid #fff; color: #555; }
.hscroll button { width: 17px; }
.hscroll .thumb { width: 17px; background: #cdcdcd; }
.hscroll .before { flex: 62; }
.hscroll .after { flex: 124; }

.console { flex: none; }
.console .panelhead { height: 16px; margin-left: 1px; }
.output { display: flex; height: 60px; border: 1px solid #7f7f7f; border-bottom-width: 2px; background: #fff; }
.output textarea { flex: 1; border: 0; padding: 2px 4px; resize: none; font: inherit; background: none; outline: 0; }
.dim { color: #bbb; }
.prompt { display: flex; height: 22px; background: #b5d3fb; }
.prompt label { width: 58px; padding-left: 8px; line-height: 20px; }
.prompt input { flex: 1; border: 1px solid #7f7f7f; border-top: 0; padding: 0 4px; font: inherit; outline: 0; }
.status { display: flex; align-items: center; height: 19px; border-top: 1px solid #7395ba; background: linear-gradient(#edf5fd, #c4d9f0); color: #213e7c; font-size: 11px; line-height: 16px; }
.status > * { height: 18px; border-left: 1px solid #f1f7fd; }
.doc { flex: 0 1 294px; padding-left: 6px; font-size: 12px; }
.page { width: 98px; padding-left: 5px; }
.status button { width: 20px; }
.coords { flex: 1; padding-left: 7px; }
.spare { width: 120px; }
.size { width: 131px; padding-left: 6px; }
</style>
